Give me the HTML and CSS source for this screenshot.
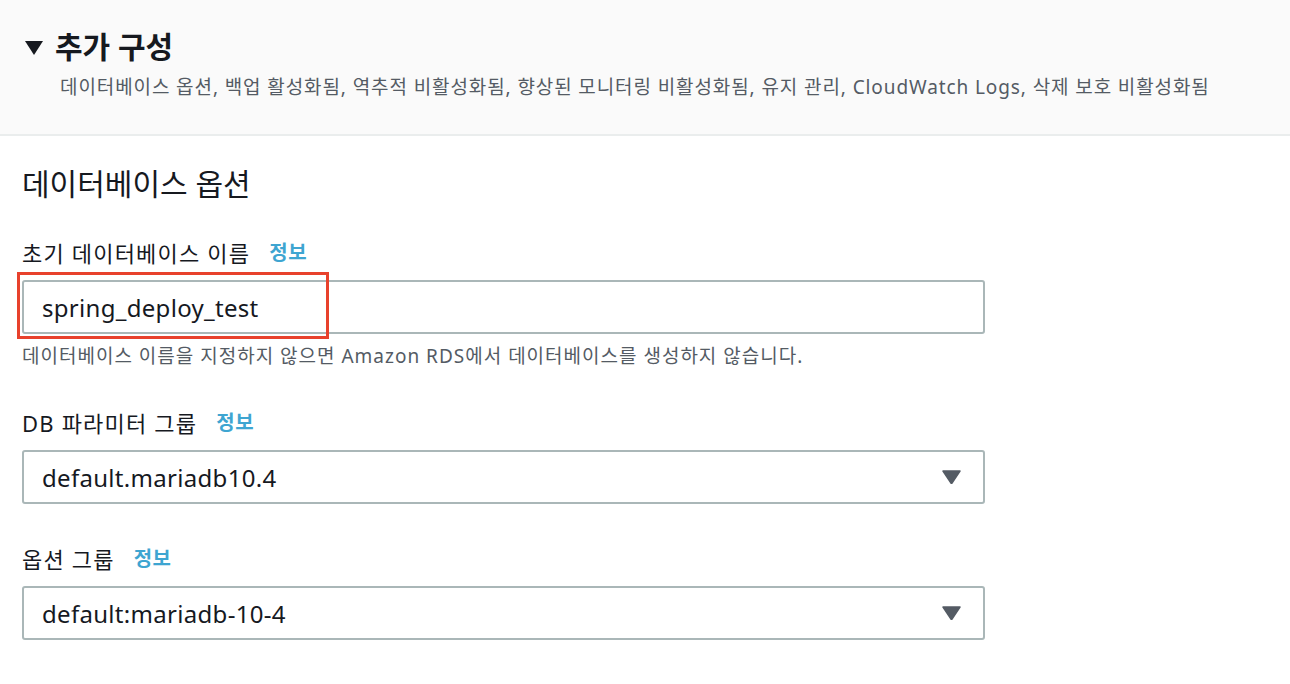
FILE: index.html
```
<!DOCTYPE html>
<html lang="ko">
<head>
<meta charset="utf-8">
<link rel="stylesheet" href="styles.css">
</head>
<body>
<div class="header">
  <div class="title-row">
    <svg class="caret" width="18" height="14" viewBox="0 0 18 14"><path d="M0 0 H18 L9 14 Z" fill="#16191f"/></svg>
    <h2 class="title">추가 구성</h2>
  </div>
  <div class="subtitle">데이터베이스 옵션, 백업 활성화됨, 역추적 비활성화됨, 향상된 모니터링 비활성화됨, 유지 관리, CloudWatch Logs, 삭제 보호 비활성화됨</div>
</div>
<div class="section">
  <h3 class="section-title">데이터베이스 옵션</h3>
  <div class="field">
    <div class="label"><span>초기 데이터베이스 이름</span><span class="info">정보</span></div>
    <div class="control">
      <div class="input">spring_deploy_test</div>
      <div class="highlight"></div>
    </div>
    <div class="help">데이터베이스 이름을 지정하지 않으면 Amazon RDS에서 데이터베이스를 생성하지 않습니다.</div>
  </div>
  <div class="field">
    <div class="label"><span>DB 파라미터 그룹</span><span class="info">정보</span></div>
    <div class="control">
      <div class="input select"><span>default.mariadb10.4</span><svg class="arrow" width="19" height="14" viewBox="0 0 19 14"><path d="M1 1 H18 L10 13 Q9.5 14 9 13 Z" fill="#545b64" stroke="#545b64" stroke-width="1.5" stroke-linejoin="round"/></svg></div>
    </div>
  </div>
  <div class="field">
    <div class="label"><span>옵션 그룹</span><span class="info">정보</span></div>
    <div class="control">
      <div class="input select"><span>default:mariadb-10-4</span><svg class="arrow" width="19" height="14" viewBox="0 0 19 14"><path d="M1 1 H18 L10 13 Q9.5 14 9 13 Z" fill="#545b64" stroke="#545b64" stroke-width="1.5" stroke-linejoin="round"/></svg></div>
    </div>
  </div>
</div>
</body>
</html>
```
FILE: styles.css
```
* { box-sizing: border-box; }
html, body { margin: 0; padding: 0; background: #fff; }
body {
  font-family: "Noto Sans", "Noto Sans CJK KR", sans-serif;
  color: #16191f;
  width: 1290px;
  height: 684px;
  overflow: hidden;
}
.header {
  background: #fafafa;
  border-bottom: 2px solid #eaeded;
  padding: 27px 0 35px 25px;
  height: 136px;
}
.title-row {
  display: flex;
  align-items: center;
  height: 40px;
}
.caret { display: block; margin-right: 12px; margin-top: 2px; }
.title {
  margin: 0;
  font-size: 30px;
  font-weight: 700;
  line-height: 40px;
}
.subtitle {
  margin-top: 8px;
  padding-left: 35px;
  font-size: 19px;
  letter-spacing: 0.9px;
  line-height: 24px;
  height: 24px;
  color: #545b64;
  white-space: nowrap;
}
.section {
  padding: 28px 0 0 22px;
}
.section-title {
  margin: 0;
  font-size: 30px;
  font-weight: 400;
  line-height: 40px;
  height: 40px;
}
.field { margin-top: 35px; }
.field + .field { margin-top: 41px; }
.label {
  display: flex;
  align-items: center;
  height: 28px;
  font-size: 22px;
  letter-spacing: 1.2px;
  line-height: 28px;
  white-space: nowrap;
}
.info {
  color: #3ea5d1;
  font-weight: 700;
  font-size: 20px;
  letter-spacing: 0.5px;
  margin-left: 19px;
}
.control {
  position: relative;
  margin-top: 13px;
  width: 963px;
}
.input {
  height: 54px;
  border: 2px solid #aab7b8;
  border-radius: 3px;
  padding: 0 22px 0 18px;
  display: flex;
  align-items: center;
  font-size: 24px;
  letter-spacing: 0.3px;
  color: #16191f;
}
.select { justify-content: space-between; }
.arrow { display: block; }
.highlight {
  position: absolute;
  left: -5px;
  top: -8px;
  width: 312px;
  height: 67px;
  border: 3px solid #e8412c;
}
.help {
  margin-top: 10px;
  font-size: 19px;
  letter-spacing: 1px;
  line-height: 24px;
  height: 24px;
  color: #545b64;
  white-space: nowrap;
}
```
